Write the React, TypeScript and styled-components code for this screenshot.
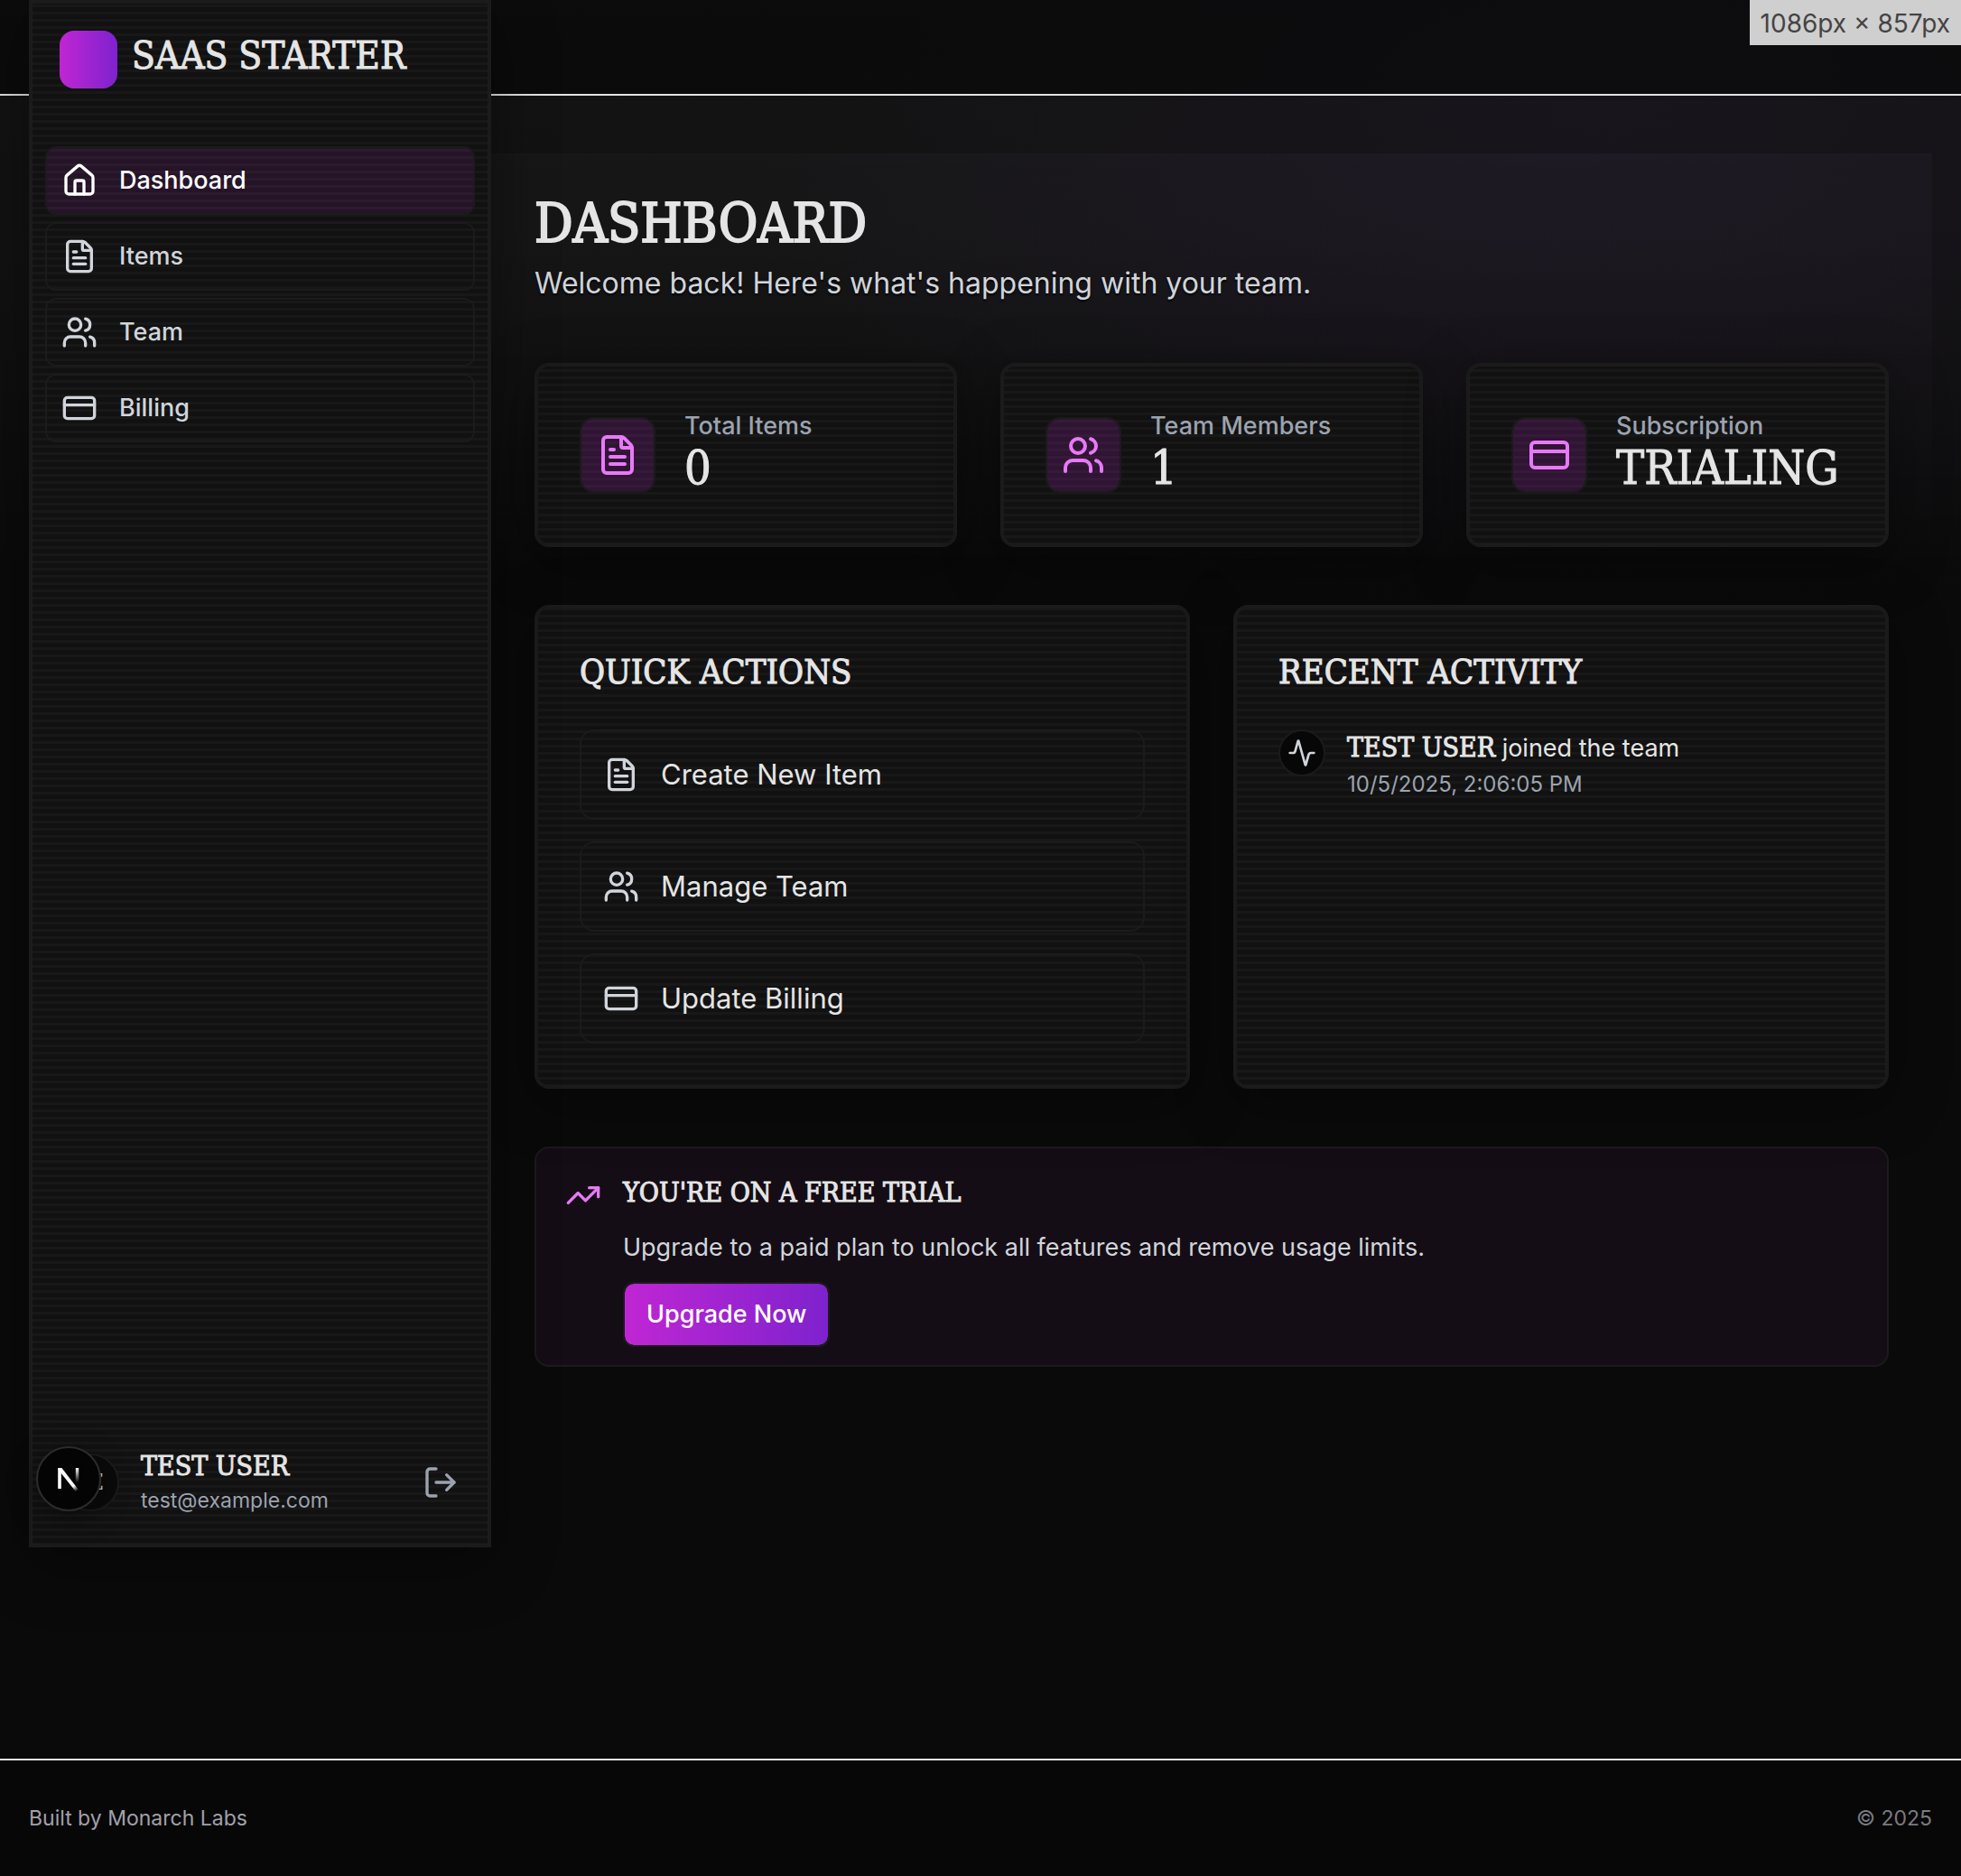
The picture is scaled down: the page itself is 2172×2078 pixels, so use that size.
import React from "react";
import styled, { createGlobalStyle, css } from "styled-components";
import {
  Activity,
  CreditCard,
  FileText,
  House,
  LogOut,
  TrendingUp,
  Users,
} from "lucide-react";
import type { LucideIcon } from "lucide-react";

const sans = `Inter, "Liberation Sans", sans-serif`;
const display = `"DejaVu Serif Condensed", "DejaVu Serif", serif`;

const color = {
  ink: "#e5e5e5",
  soft: "#d1d5db",
  muted: "#9ca3af",
  accent: "#e879f9",
  line: "#1b1b1b",
};

const GlobalStyle = createGlobalStyle`
  *, *::before, *::after { box-sizing: border-box; }
  body {
    margin: 0;
    background: #0a0a0a;
    color: ${color.ink};
    font-family: ${sans};
    font-size: 27px;
    line-height: 40px;
  }
  h1, h2, h3, p, ul, dl, dd { margin: 0; padding: 0; }
  ul { list-style: none; }
  a { color: inherit; text-decoration: none; }
  button { font: inherit; color: inherit; cursor: pointer; }
`;

const scanlines = css`
  background: repeating-linear-gradient(0deg, #181818 0 3px, #111111 3px 8px) padding-box;
  border: 2px solid ${color.line};
  box-shadow: inset 0 0 0 2px ${color.line}, 0 16px 64px rgba(0, 0, 0, 0.4);
`;

const inked = css`
  -webkit-text-stroke: 1px currentColor;
`;

const brandGradient = "linear-gradient(90deg, #c026d3, #7e22ce)";

const Page = styled.div`
  display: flex;
  flex-direction: column;
  min-height: 100vh;
  background:
    radial-gradient(ellipse 44% 28% at 82% 7%, rgba(70, 40, 110, 0.1), transparent),
    linear-gradient(180deg, rgba(255, 255, 255, 0.04) 0, rgba(255, 255, 255, 0.03) 300px, transparent 640px);
`;

const TopBar = styled.header`
  height: 106px;
  border-bottom: 2px solid #e4e4e7;
  background: rgba(5, 5, 5, 0.55);
`;

const Body = styled.div`
  flex: 1;
  display: grid;
  grid-template-columns: 512px minmax(0, 1fr);
  padding: 0 32px 234px;
`;

const Sidebar = styled.aside`
  ${scanlines}
  position: relative;
  margin-top: -106px;
  display: flex;
  flex-direction: column;
`;

const Brand = styled.a`
  display: flex;
  align-items: flex-start;
  gap: 16px;
  padding: 32px;
`;

const BrandMark = styled.span`
  width: 64px;
  height: 64px;
  border-radius: 16px;
  background: ${brandGradient};
`;

const BrandName = styled.span`
  ${inked}
  font: 400 42px/56px ${display};
`;

const Nav = styled.nav`
  flex: 1;
  padding: 32px 16px;

  ul {
    display: grid;
    gap: 8px;
  }
`;

const NavLink = styled.a<{ $active?: boolean }>`
  display: flex;
  align-items: center;
  gap: 24px;
  padding: 16px;
  border: 2px solid ${color.line};
  border-radius: 12px;
  font-weight: 500;
  color: ${(p) => (p.$active ? "#ffffff" : color.soft)};
  background: ${(p) => (p.$active ? "rgba(192, 38, 211, 0.12)" : "transparent")};
`;

const UserRow = styled.div`
  display: flex;
  align-items: center;
  gap: 24px;
  padding: 32px 32px 32px 34px;
`;

const Avatar = styled.span`
  display: grid;
  place-items: center;
  width: 64px;
  height: 64px;
  border: 2px solid ${color.line};
  border-radius: 50%;
  background: #0a0a0a;
  color: ${color.soft};
  font: 400 24px/40px ${display};
`;

const UserText = styled.div`
  flex: 1;
  min-width: 0;
`;

const PersonName = styled.strong`
  ${inked}
  font: 400 30px/40px ${display};
  color: ${color.ink};
`;

const UserName = styled(PersonName)`
  display: block;
`;

const Email = styled.p`
  font-size: 23px;
  line-height: 36px;
  color: ${color.muted};
`;

const IconButton = styled.button`
  display: flex;
  padding: 0 2px;
  border: 0;
  background: none;
  color: ${color.muted};
`;

const DevButton = styled.button`
  position: absolute;
  left: 6px;
  bottom: 38px;
  display: grid;
  place-items: center;
  width: 72px;
  height: 72px;
  padding: 0;
  border: 2px solid #2c2c2c;
  border-radius: 50%;
  background: #040404;
  box-shadow: 0 8px 32px rgba(0, 0, 0, 0.35);
`;

const Main = styled.main`
  margin-top: 64px;
  padding: 48px;
  background:
    radial-gradient(ellipse 60% 380px at 72% 0, rgba(70, 50, 130, 0.06), transparent),
    linear-gradient(180deg, rgba(255, 255, 255, 0.018) 0, transparent 480px);
`;

const PageTitle = styled.h1`
  margin-bottom: 12px;
  font: 400 59px/60px ${display};
  -webkit-text-stroke: 2px currentColor;
`;

const Lead = styled.p`
  font-size: 32px;
  line-height: 48px;
  color: ${color.soft};
  text-shadow: 0 2px 2px rgba(0, 0, 0, 0.8);
`;

const Stats = styled.dl`
  display: grid;
  grid-template-columns: repeat(3, minmax(0, 1fr));
  gap: 48px;
  margin-top: 64px;
`;

const Card = styled.section`
  ${scanlines}
  padding: 48px;
  border-radius: 16px;
`;

const StatCard = styled.div`
  ${scanlines}
  display: flex;
  align-items: center;
  gap: 32px;
  padding: 48px;
  border-radius: 16px;
`;

const StatIcon = styled.span`
  display: flex;
  padding: 16px;
  border: 2px solid ${color.line};
  border-radius: 16px;
  background: rgba(192, 38, 211, 0.18);
  background-clip: padding-box;
  color: ${color.accent};
`;

const StatText = styled.div`
  padding-bottom: 12px;
`;

const StatLabel = styled.dt`
  font-weight: 500;
  color: ${color.muted};
`;

const StatValue = styled.dd`
  ${inked}
  font: 400 52px/52px ${display};
`;

const Panels = styled.div`
  display: grid;
  grid-template-columns: repeat(2, minmax(0, 1fr));
  gap: 48px;
  margin-top: 64px;
`;

const CardTitle = styled.h2`
  ${inked}
  margin-bottom: 40px;
  font: 400 38px/48px ${display};
`;

const ActionList = styled.ul`
  display: grid;
  gap: 24px;
`;

const ActionLink = styled.a`
  display: flex;
  align-items: center;
  gap: 24px;
  padding: 24px;
  border: 2px solid ${color.line};
  border-radius: 16px;
  font-size: 31px;
  line-height: 48px;

  svg {
    color: ${color.soft};
  }
`;

const ActivityItem = styled.li`
  display: flex;
  align-items: flex-start;
  gap: 24px;
`;

const ActivityIcon = styled.span`
  display: flex;
  padding: 8px;
  border: 2px solid ${color.line};
  border-radius: 50%;
  background: #070707;
  color: ${color.soft};
`;

const ActivityTime = styled.time`
  display: block;
  font-size: 24px;
  color: ${color.muted};
`;

const Banner = styled.section`
  display: flex;
  align-items: flex-start;
  gap: 24px;
  margin-top: 64px;
  padding: 32px 32px 20px;
  border: 2px solid #1d1a1d;
  border-radius: 16px;
  background: #150d15;

  > svg {
    color: ${color.accent};
  }
`;

const BannerTitle = styled.h3`
  ${inked}
  margin-bottom: 24px;
  font: 400 30px/34px ${display};
`;

const BannerText = styled.p`
  margin-bottom: 18px;
  color: ${color.soft};
`;

const UpgradeButton = styled.button`
  padding: 14px 24px;
  border: 2px solid ${color.line};
  border-radius: 12px;
  background: ${brandGradient} padding-box;
  color: #ffffff;
  font-weight: 500;
`;

const Footer = styled.footer`
  display: flex;
  justify-content: space-between;
  padding: 48px 32px;
  border-top: 2px solid #e4e4e7;
  background: #070707;
  font-size: 23px;
  line-height: 32px;
  color: #a1a1aa;
`;

const Copyright = styled.span`
  color: #7a7a82;
`;

const SizeReadout = styled.output`
  position: fixed;
  top: 0;
  right: 0;
  padding: 6px 12px 4px;
  background: #cfcfcf;
  color: #444444;
  font-size: 28px;
`;

type Entry = { icon: LucideIcon; label: string };

const navEntries: Entry[] = [
  { icon: House, label: "Dashboard" },
  { icon: FileText, label: "Items" },
  { icon: Users, label: "Team" },
  { icon: CreditCard, label: "Billing" },
];

const stats: (Entry & { value: string })[] = [
  { icon: FileText, label: "Total Items", value: "0" },
  { icon: Users, label: "Team Members", value: "1" },
  { icon: CreditCard, label: "Subscription", value: "TRIALING" },
];

const actions: Entry[] = [
  { icon: FileText, label: "Create New Item" },
  { icon: Users, label: "Manage Team" },
  { icon: CreditCard, label: "Update Billing" },
];

function NextMark() {
  return (
    <svg width="32" height="32" viewBox="0 0 32 32" fill="none" aria-hidden="true">
      <defs>
        <linearGradient id="diagonal" x1="18" y1="18" x2="26" y2="29" gradientUnits="userSpaceOnUse">
          <stop stopColor="#fff" />
          <stop offset="0.5" stopColor="#fff" />
          <stop offset="1" stopColor="#fff" stopOpacity="0" />
        </linearGradient>
        <linearGradient id="stem" x1="0" y1="4" x2="0" y2="20" gradientUnits="userSpaceOnUse">
          <stop stopColor="#fff" />
          <stop offset="1" stopColor="#fff" stopOpacity="0" />
        </linearGradient>
      </defs>
      <path d="M6 27V5" stroke="#fff" strokeWidth="3.6" />
      <path d="M4.2 4H8.4L28 29.5L25 31.5L4.2 5.5Z" fill="url(#diagonal)" />
      <path d="M25.5 4V20" stroke="url(#stem)" strokeWidth="3.4" />
    </svg>
  );
}

export default function App() {
  return (
    <>
      <GlobalStyle />
      <Page>
        <TopBar />
        <Body>
          <Sidebar>
            <Brand href="#">
              <BrandMark />
              <BrandName>SAAS STARTER</BrandName>
            </Brand>
            <Nav aria-label="Main">
              <ul>
                {navEntries.map(({ icon: Icon, label }, i) => (
                  <li key={label}>
                    <NavLink href="#" $active={i === 0} aria-current={i === 0 ? "page" : undefined}>
                      <Icon size={40} />
                      {label}
                    </NavLink>
                  </li>
                ))}
              </ul>
            </Nav>
            <UserRow>
              <Avatar aria-hidden="true">TE</Avatar>
              <UserText>
                <UserName>TEST USER</UserName>
                <Email>test@example.com</Email>
              </UserText>
              <IconButton type="button" aria-label="Sign out">
                <LogOut size={40} />
              </IconButton>
            </UserRow>
            <DevButton type="button" aria-label="Open developer tools">
              <NextMark />
            </DevButton>
          </Sidebar>

          <Main>
            <PageTitle>DASHBOARD</PageTitle>
            <Lead>Welcome back! Here's what's happening with your team.</Lead>

            <Stats>
              {stats.map(({ icon: Icon, label, value }) => (
                <StatCard key={label}>
                  <StatIcon>
                    <Icon size={48} />
                  </StatIcon>
                  <StatText>
                    <StatLabel>{label}</StatLabel>
                    <StatValue>{value}</StatValue>
                  </StatText>
                </StatCard>
              ))}
            </Stats>

            <Panels>
              <Card>
                <CardTitle>QUICK ACTIONS</CardTitle>
                <ActionList>
                  {actions.map(({ icon: Icon, label }) => (
                    <li key={label}>
                      <ActionLink href="#">
                        <Icon size={40} />
                        {label}
                      </ActionLink>
                    </li>
                  ))}
                </ActionList>
              </Card>
              <Card>
                <CardTitle>RECENT ACTIVITY</CardTitle>
                <ul>
                  <ActivityItem>
                    <ActivityIcon>
                      <Activity size={32} />
                    </ActivityIcon>
                    <div>
                      <p>
                        <PersonName>TEST USER</PersonName> joined the team
                      </p>
                      <ActivityTime dateTime="2025-10-05T14:06:05">10/5/2025, 2:06:05 PM</ActivityTime>
                    </div>
                  </ActivityItem>
                </ul>
              </Card>
            </Panels>

            <Banner>
              <TrendingUp size={40} />
              <div>
                <BannerTitle>YOU'RE ON A FREE TRIAL</BannerTitle>
                <BannerText>Upgrade to a paid plan to unlock all features and remove usage limits.</BannerText>
                <UpgradeButton type="button">Upgrade Now</UpgradeButton>
              </div>
            </Banner>
          </Main>
        </Body>
        <Footer>
          <span>Built by Monarch Labs</span>
          <Copyright>© 2025</Copyright>
        </Footer>
      </Page>
      <SizeReadout>1086px × 857px</SizeReadout>
    </>
  );
}
